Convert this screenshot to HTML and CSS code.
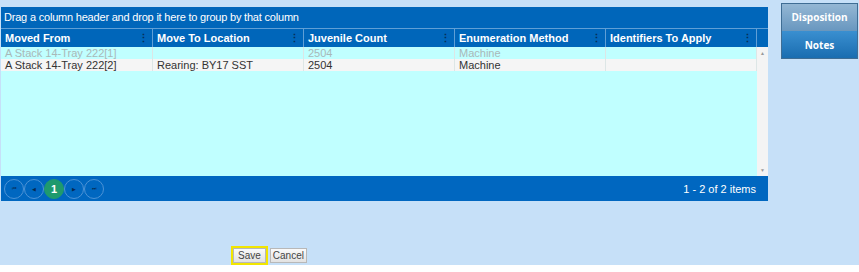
FILE: index.html
```html
<!DOCTYPE html>
<html lang="en">
<head>
  <meta charset="UTF-8" />
  <title>Disposition</title>
  <link rel="stylesheet" href="styles.css">
</head>
<body>

  <div class="page">

    <div class="main">

      <!-- grid -->
      <div class="grid">
        <div class="group-bar">Drag a column header and drop it here to group by that column</div>

        <div class="grid-head">
          <div class="th">Moved From<span class="menu">&#8942;</span></div>
          <div class="th">Move To Location<span class="menu">&#8942;</span></div>
          <div class="th">Juvenile Count<span class="menu">&#8942;</span></div>
          <div class="th">Enumeration Method<span class="menu">&#8942;</span></div>
          <div class="th">Identifiers To Apply<span class="menu">&#8942;</span></div>
          <div class="th-pad"></div>
        </div>

        <div class="grid-body">
          <div class="rows">
            <div class="row row-faded">
              <div class="td">A Stack 14-Tray 222[1]</div>
              <div class="td"></div>
              <div class="td">2504</div>
              <div class="td">Machine</div>
              <div class="td"></div>
            </div>
            <div class="row row-alt">
              <div class="td">A Stack 14-Tray 222[2]</div>
              <div class="td">Rearing: BY17 SST</div>
              <div class="td">2504</div>
              <div class="td">Machine</div>
              <div class="td"></div>
            </div>
          </div>
          <div class="scrollbar">
            <span class="arrow">&#9650;</span>
            <span class="arrow">&#9660;</span>
          </div>
        </div>

        <div class="pager">
          <div class="pages">
            <span class="pg">&#9198;</span>
            <span class="pg">&#9664;</span>
            <span class="pg pg-on">1</span>
            <span class="pg">&#9654;</span>
            <span class="pg">&#9197;</span>
          </div>
          <div class="info">1 - 2 of 2 items</div>
        </div>
      </div>

      <!-- side buttons -->
      <div class="side">
        <button class="side-btn disp">Disposition</button>
        <button class="side-btn notes">Notes</button>
      </div>

    </div>

    <div class="actions">
      <button class="btn btn-save">Save</button>
      <button class="btn">Cancel</button>
    </div>

  </div>

  <div class="bottom-band"></div>

</body>
</html>
```

FILE: styles.css
```css
body {
  margin: 0;
  font-family: "Liberation Sans", Arial, sans-serif;
  font-size: 11px;
  background-color: #c6e0f8;
}

.page {
  height: 265px;
  display: flex;
  flex-direction: column;
}

.main {
  display: flex;
  align-items: flex-start;
}

/* grid */
.grid {
  width: 767px;
  margin: 7px 0 0 1px;
  background: #c0ffff;
}

.group-bar {
  height: 21px;
  line-height: 20px;
  background-color: #0066ba;
  color: white;
  padding-left: 3px;
  font-size: 11px;
  letter-spacing: -0.2px;
}

.grid-head {
  display: flex;
  height: 18px;
  background-color: #0066ba;
  border-top: 1px solid #5f9fd6;
}
.th {
  width: 151px;
  flex: none;
  box-sizing: border-box;
  border-right: 1px solid #5f9fd6;
  color: white;
  font-weight: bold;
  line-height: 18px;
  padding-left: 4px;
  position: relative;
}
.th:first-child {
  width: 152px;
}
.th .menu {
  position: absolute;
  right: 3px;
  top: 0;
  color: #06305a;
  font-weight: bold;
  font-size: 11px;
}
.th-pad {
  flex: 1;
}

.grid-body {
  display: flex;
  height: 129px;
}
.rows {
  width: 756px;
}
.row {
  display: flex;
  height: 12px;
  line-height: 12px;
  color: #333;
}
.row-faded {
  color: #a9b8b8;
}
.row-alt {
  background-color: #f5f5f5;
}
.td {
  width: 151px;
  flex: none;
  box-sizing: border-box;
  border-right: 1px solid #dde6e6;
  padding-left: 4px;
  white-space: nowrap;
}
.td:first-child {
  width: 152px;
}

.scrollbar {
  flex: 1;
  background: #f4f4f4;
  display: flex;
  flex-direction: column;
  justify-content: space-between;
  align-items: center;
  padding: 2px 0 2px;
}
.arrow {
  font-size: 5px;
  color: #999;
  line-height: 8px;
}

.pager {
  height: 25px;
  background-color: #0067c0;
  display: flex;
  align-items: center;
  justify-content: space-between;
  padding: 0 12px 0 3px;
}
.pages {
  display: flex;
  gap: 0;
}
.pg {
  width: 18px;
  height: 18px;
  border: 1px solid #4c93d6;
  border-radius: 50%;
  display: flex;
  justify-content: center;
  align-items: center;
  font-size: 5px;
  color: #062a52;
}
.pg-on {
  background-color: #1f9a6e;
  border-color: #1f9a6e;
  color: white;
  font-size: 11px;
  font-weight: bold;
}
.info {
  color: white;
  font-size: 11px;
}

/* side buttons */
.side {
  margin: 3px 0 0 13px;
  width: 75px;
  display: flex;
  flex-direction: column;
  border: 1px solid #3f6d94;
}
.side-btn {
  height: 27px;
  border: none;
  color: white;
  font-family: "Open Sans", sans-serif;
  font-weight: bold;
  font-size: 10px;
  padding: 0;
}
.disp {
  background: linear-gradient(#94b7d4, #6a98c0);
  border-bottom: 1px solid #6a97bd;
}
.notes {
  background: linear-gradient(#3a8fd0, #1a6db0);
}

.actions {
  margin: auto 0 2px 233px;
  display: flex;
  gap: 4px;
  align-items: center;
}
.btn {
  font-family: "Liberation Sans", Arial, sans-serif;
  font-size: 10px;
  color: #444;
  background: linear-gradient(#fafafa, #e2e2e2);
  border: 1px solid #b8b8b8;
  height: 15px;
  padding: 0 2px;
  line-height: 13px;
}
.btn-save {
  outline: 2px solid #f2e600;
  padding: 0 4px;
}

.bottom-band {
  height: 7px;
  background: white;
}
```
